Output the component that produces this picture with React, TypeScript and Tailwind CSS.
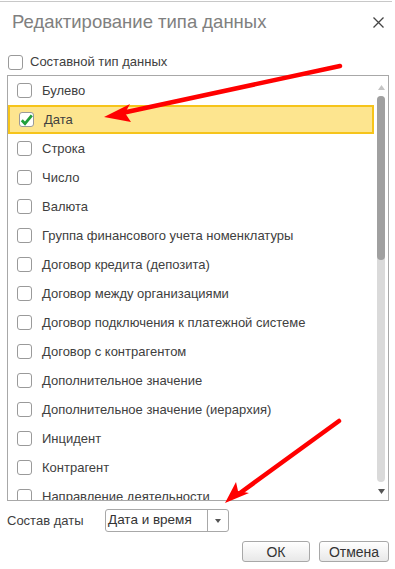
import React from "react";

const items = [
  "Булево",
  "Дата",
  "Строка",
  "Число",
  "Валюта",
  "Группа финансового учета номенклатуры",
  "Договор кредита (депозита)",
  "Договор между организациями",
  "Договор подключения к платежной системе",
  "Договор с контрагентом",
  "Дополнительное значение",
  "Дополнительное значение (иерархия)",
  "Инцидент",
  "Контрагент",
  "Направление деятельности",
];

function Box({ checked }: { checked?: boolean }) {
  return (
    <div className="w-[15px] h-[15px] shrink-0 rounded-[3px] border border-[#9a9a9a] bg-white flex items-center justify-center">
      {checked && (
        <svg width="13" height="12" viewBox="0 0 13 12">
          <path d="M1.8 6.2 L5 9.6 L11.8 1.4" fill="none" stroke="#23a03a" strokeWidth="2.8" />
        </svg>
      )}
    </div>
  );
}

export default function App() {
  return (
    <div
      className="relative w-[395px] h-[569px] bg-white overflow-hidden text-[13px] text-[#404040]"
      style={{ fontFamily: '"Liberation Sans", Arial, sans-serif' }}
    >
      <div className="h-[1px] mt-[1px] bg-[#c8c8c8] w-[392px]" />
      <div className="flex items-center justify-between pl-[12px] pr-[11px] h-[41px]">
        <div className="text-[18.5px] text-[#808080] leading-none">Редактирование типа данных</div>
        <svg width="11" height="11" viewBox="0 0 11 11">
          <path d="M0.5 0.5 L10.5 10.5 M10.5 0.5 L0.5 10.5" stroke="#444" strokeWidth="1.3" />
        </svg>
      </div>
      <div className="flex items-center gap-[7px] pl-[8px] h-[32px] pt-[6px]">
        <Box />
        <span>Составной тип данных</span>
      </div>
      <div className="ml-[7px] w-[382px] h-[426px] border border-[#a8a8a8] flex overflow-hidden">
        <div className="flex-1 flex flex-col overflow-hidden">
          {items.map((t, i) => (
            <div
              key={t}
              className={
                "shrink-0 h-[29px] flex items-center gap-[10px] pl-[9px] " +
                (i === 1 ? "bg-[#fde58f] border-2 border-[#f6c41a] pl-[7px]" : "")
              }
            >
              <Box checked={i === 1} />
              <span>{t}</span>
            </div>
          ))}
        </div>
        <div className="w-[14px] shrink-0 flex flex-col items-center pt-[9px] pb-[6px]">
          <svg width="7" height="5" viewBox="0 0 7 5">
            <path d="M0 5 L3.5 0 L7 5 Z" fill="#c4c4c4" />
          </svg>
          <div className="mt-[6px] w-[8px] flex-1 rounded-full bg-[#dadada] flex flex-col">
            <div className="h-[164px] rounded-full bg-[#a0a0a0]" />
          </div>
          <svg className="mt-[7px]" width="7" height="5" viewBox="0 0 7 5">
            <path d="M0 0 L7 0 L3.5 5 Z" fill="#555" />
          </svg>
        </div>
      </div>
      <div className="flex items-center pl-[7px] mt-[8px] h-[23px]">
        <span className="w-[98px]">Состав даты</span>
        <div className="w-[124px] h-[23px] border border-[#a8a8a8] rounded-[3px] flex items-center">
          <span className="flex-1 pl-[2px] text-[13.5px] text-[#333]">Дата и время</span>
          <div className="w-[21px] h-full border-l border-[#a8a8a8] flex items-center justify-center">
            <svg width="6" height="4" viewBox="0 0 6 4">
              <path d="M0 0 L6 0 L3 4 Z" fill="#555" />
            </svg>
          </div>
        </div>
      </div>
      <div className="flex justify-end gap-[9px] pr-[6px] mt-[9px]">
        <button className="w-[68px] h-[21px] border border-[#a8a8a8] rounded-[3px] bg-gradient-to-b from-white to-[#e8e8e8] text-[14px] text-[#333]">
          ОК
        </button>
        <button className="w-[70px] h-[21px] border border-[#a8a8a8] rounded-[3px] bg-gradient-to-b from-white to-[#e8e8e8] text-[14px] text-[#333]">
          Отмена
        </button>
      </div>

      <svg className="absolute left-0 top-0 pointer-events-none" width="395" height="569">
        <path d="M340 66 L122 113" stroke="#ff0000" strokeWidth="4.5" strokeLinecap="round" />
        <path d="M104 117 L130 104 L125 113 L131 122 Z" fill="#ff0000" />
        <path d="M339 421 L240 493" stroke="#ff0000" strokeWidth="4.5" strokeLinecap="round" />
        <path d="M225 503 L236 482 L238 491 L249 493 Z" fill="#ff0000" />
      </svg>
    </div>
  );
}
